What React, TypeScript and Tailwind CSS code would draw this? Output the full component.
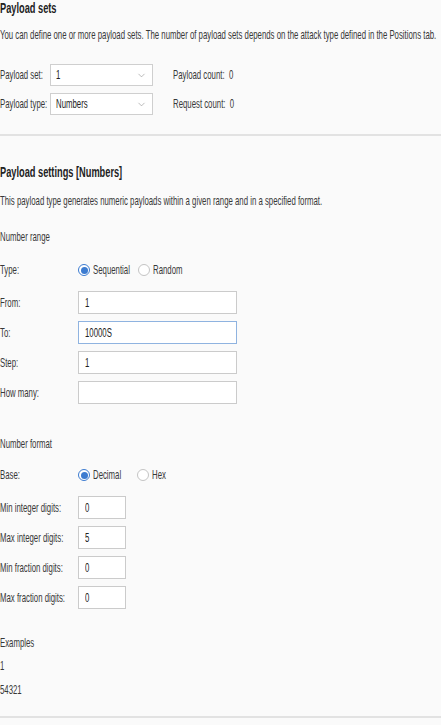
import { ChevronDown } from "lucide-react";
import type { ReactNode } from "react";

type Field = { label: string; value: string; focused?: boolean };

const rangeFields: Field[] = [
  { label: "From:", value: "1" },
  { label: "To:", value: "10000S", focused: true },
  { label: "Step:", value: "1" },
  { label: "How many:", value: "" },
];

const formatFields: Field[] = [
  { label: "Min integer digits:", value: "0" },
  { label: "Max integer digits:", value: "5" },
  { label: "Min fraction digits:", value: "0" },
  { label: "Max fraction digits:", value: "0" },
];

// the UI font is a condensed face; squeeze the regular one to match
function T({ children, className = "" }: { children: ReactNode; className?: string }) {
  return (
    <span className={"inline-block origin-left scale-x-[0.6] whitespace-nowrap " + className}>
      {children}
    </span>
  );
}

function Heading({ children, className = "" }: { children: ReactNode; className?: string }) {
  return (
    <h2 className={"h-[14px] leading-[14px] font-bold text-[14px] text-[#222] " + className}>
      <span className="inline-block origin-left scale-x-[0.66] whitespace-nowrap">{children}</span>
    </h2>
  );
}

function Radio({ label, checked, width }: { label: string; checked?: boolean; width: string }) {
  return (
    <span className={"flex items-center gap-[3px] " + width}>
      {checked ? (
        <span className="grid place-items-center shrink-0 size-[12px] rounded-full border border-[#3c7bd0] bg-white">
          <span className="size-[7px] rounded-full bg-[#3c7bd0]" />
        </span>
      ) : (
        <span className="shrink-0 size-[12px] rounded-full border border-[#c4c4c4] bg-white" />
      )}
      <T>{label}</T>
    </span>
  );
}

function Select({ value }: { value: string }) {
  return (
    <div className="flex items-center justify-between w-[103px] h-[22px] border border-[#cfcfcf] bg-white pl-[5px] pr-[5px]">
      <T className="text-[#222]">{value}</T>
      <ChevronDown className="w-[11px] h-[11px] text-[#8a8a8a]" strokeWidth={1.25} />
    </div>
  );
}

function InputRow({ f, wide }: { f: Field; wide?: boolean }) {
  return (
    <div className="flex items-center h-[23px]">
      <span className="w-[78px] shrink-0">
        <T>{f.label}</T>
      </span>
      <div
        className={
          (wide ? "w-[159px] " : "w-[48px] ") +
          (f.focused ? "border-[#8fb3e0] " : "border-[#cbcbcb] ") +
          "h-[23px] border bg-white pl-[6px] flex items-center text-[#222]"
        }
      >
        <T>{f.value}</T>
      </div>
    </div>
  );
}

export default function App() {
  return (
    <div className="w-[441px] min-h-[725px] bg-[#fafafa] text-[#383838] text-[13px] leading-[14px] font-['Liberation_Sans',Arial,sans-serif] overflow-hidden">
      {/* Payload sets */}
      <section className="pt-px">
        <Heading>Payload sets</Heading>
        <p className="mt-[13px] h-[14px]">
          <T>
            You can define one or more payload sets. The number of payload sets depends on the attack type defined in the Positions tab.
          </T>
        </p>
        <div className="mt-[22px] flex flex-col gap-[7px]">
          <div className="flex items-center h-[22px]">
            <span className="w-[50px] shrink-0">
              <T>Payload set:</T>
            </span>
            <Select value="1" />
            <span className="ml-[20px]">
              <T>Payload count:&nbsp; 0</T>
            </span>
          </div>
          <div className="flex items-center h-[22px]">
            <span className="w-[50px] shrink-0">
              <T>Payload type:</T>
            </span>
            <Select value="Numbers" />
            <span className="ml-[20px]">
              <T>Request count:&nbsp; 0</T>
            </span>
          </div>
        </div>
      </section>

      <div className="mt-[19px] h-[2px] bg-[#e2e2e2]" />

      {/* Payload settings */}
      <section>
        <Heading className="mt-[29px]">Payload settings [Numbers]</Heading>
        <p className="mt-[15px] h-[14px]">
          <T>This payload type generates numeric payloads within a given range and in a specified format.</T>
        </p>

        <p className="mt-[22px] h-[14px]">
          <T>Number range</T>
        </p>
        <div className="mt-[15px] flex items-center h-[22px]">
          <span className="w-[78px] shrink-0">
            <T>Type:</T>
          </span>
          <div className="flex items-center">
            <Radio label="Sequential" checked width="w-[60px]" />
            <Radio label="Random" width="w-[60px]" />
          </div>
        </div>
        <div className="mt-[10px] flex flex-col gap-[7px]">
          {rangeFields.map((f) => (
            <InputRow key={f.label} f={f} wide />
          ))}
        </div>

        <p className="mt-[33px] h-[14px]">
          <T>Number format</T>
        </p>
        <div className="mt-[13px] flex items-center h-[22px]">
          <span className="w-[78px] shrink-0">
            <T>Base:</T>
          </span>
          <div className="flex items-center">
            <Radio label="Decimal" checked width="w-[59px]" />
            <Radio label="Hex" width="w-[40px]" />
          </div>
        </div>
        <div className="mt-[10px] flex flex-col gap-[7px]">
          {formatFields.map((f) => (
            <InputRow key={f.label} f={f} />
          ))}
        </div>

        <p className="mt-[27px] h-[14px]">
          <T>Examples</T>
        </p>
        <p className="mt-[9px] h-[14px]">
          <T>1</T>
        </p>
        <p className="mt-[10px] h-[14px]">
          <T>54321</T>
        </p>
      </section>

      <div className="mt-[19px] h-[2px] bg-[#e2e2e2]" />
    </div>
  );
}
